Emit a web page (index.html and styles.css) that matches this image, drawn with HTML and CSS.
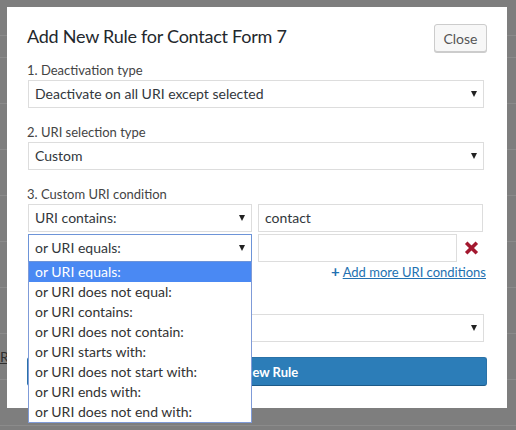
FILE: index.html
```html
<!DOCTYPE html>
<html>
<head>
<meta charset="utf-8">
<link rel="stylesheet" href="styles.css">
</head>
<body>
<div class="page">
  <div class="bg-row r1"></div>
  <div class="bg-row r2"></div>
  <div class="bg-row"></div>
  <div class="bg-row"></div>
  <div class="bg-row"></div>
  <div class="bg-row"></div>
  <div class="bg-row"></div>
  <div class="bg-row"></div>
  <div class="bg-row"><a class="bg-link">Rules</a></div>
  <div class="bg-row"></div>
</div>

<div class="modal">
  <div class="head">
    <h2 class="title">Add New Rule for Contact Form 7</h2>
    <button class="btn-close">Close</button>
  </div>

  <div class="field">
    <div class="label">1. Deactivation type</div>
    <div class="select wide"><span>Deactivate on all URI except selected</span><i class="caret"></i></div>
  </div>

  <div class="field">
    <div class="label">2. URI selection type</div>
    <div class="select wide"><span>Custom</span><i class="caret"></i></div>
  </div>

  <div class="field">
    <div class="label">3. Custom URI condition</div>
    <div class="cond-row first">
      <div class="select half"><span>URI contains:</span><i class="caret"></i></div>
      <div class="input full">contact</div>
    </div>
    <div class="cond-row">
      <div class="sel-wrap">
        <div class="select half focus"><span>or URI equals:</span><i class="caret"></i></div>
        <ul class="dropdown">
          <li class="active">or URI equals:</li>
          <li>or URI does not equal:</li>
          <li>or URI contains:</li>
          <li>or URI does not contain:</li>
          <li>or URI starts with:</li>
          <li>or URI does not start with:</li>
          <li>or URI ends with:</li>
          <li>or URI does not end with:</li>
        </ul>
      </div>
      <div class="input short"></div>
      <svg class="remove" width="15" height="14" viewBox="0 0 15 14"><path d="M2.2 1.8 L12.8 12.2 M12.8 1.8 L2.2 12.2" stroke="#a3182f" stroke-width="3.6" stroke-linecap="butt" fill="none"/></svg>
    </div>
    <div class="add-line">
      <a class="add-link"><span class="plus">+</span><span class="add-text">Add more URI conditions</span></a>
    </div>
  </div>

  <div class="field">
    <div class="label-space"></div>
    <div class="select wide"><span></span><i class="caret"></i></div>
  </div>

  <button class="btn-primary">Add New Rule</button>
</div>
</body>
</html>
```

FILE: styles.css
```css
* { box-sizing: border-box; }

body {
  margin: 0;
  width: 516px;
  height: 430px;
  overflow: hidden;
  position: relative;
  background: #7e7e7e;
  font-family: Lato, "Open Sans", sans-serif;
}

/* background page behind overlay */
.page {
  display: flex;
  flex-direction: column;
}
.bg-row {
  height: 46px;
  border-bottom: 1px solid #8b8b8b;
  display: flex;
  align-items: center;
}
.bg-row.r1 { height: 36px; }
.bg-row.r2 { height: 22px; }
.bg-link {
  font-size: 14px;
  color: #2f2f2f;
  text-decoration: underline;
}

/* modal */
.modal {
  position: absolute;
  left: 7px;
  top: 7px;
  width: 500px;
  height: 401px;
  background: #fff;
  padding: 17px 20px 0 20px;
  color: #32373c;
}
.head {
  display: flex;
  justify-content: space-between;
  align-items: flex-start;
  height: 28px;
  margin-bottom: 9px;
}
.title {
  margin: 0;
  font-size: 18px;
  letter-spacing: -0.25px;
  font-weight: 400;
  line-height: 24px;
  color: #23282d;
}
.btn-close {
  width: 53px;
  height: 28px;
  padding: 0;
  border: 1px solid #cccccc;
  border-radius: 3px;
  background: #f7f7f7;
  box-shadow: 0 1px 0 #cccccc;
  font-family: inherit;
  font-size: 14px;
  color: #555555;
}

.field { margin-bottom: 15px; }
.label {
  font-size: 13px;
  line-height: 18px;
  height: 18px;
  color: #444444;
}
.label-space { height: 18px; }

.select {
  margin: 1px 0 0 1px;
  height: 28px;
  border: 1px solid #dddddd;
  background: #fff;
  display: flex;
  align-items: center;
  justify-content: space-between;
  padding: 0 6px;
  font-size: 14px;
  line-height: 18px;
  color: #32373c;
}
.select.wide { width: 456px; }
.select.half { width: 224px; margin: 0; }
.select.focus { border-color: #6d94d8; }
.caret {
  width: 0;
  height: 0;
  border-left: 3.5px solid transparent;
  border-right: 3.5px solid transparent;
  border-top: 6px solid #222;
}

.cond-row {
  display: flex;
  align-items: center;
  margin: 2px 0 0 1px;
  height: 28px;
}
.cond-row.first { margin-top: 1px; }
.input {
  height: 28px;
  border: 1px solid #dddddd;
  margin-left: 6px;
  padding: 0 6px;
  font-size: 14px;
  line-height: 26px;
  color: #32373c;
}
.input.full { width: 225px; }
.input.short { width: 199px; }
.remove { margin-left: 7px; display: block; }

.sel-wrap { position: relative; width: 224px; height: 28px; }
.dropdown {
  position: absolute;
  left: 0;
  top: 28px;
  width: 224px;
  margin: 0;
  padding: 0;
  list-style: none;
  background: #fff;
  border: 1px solid #7f9bd8;
  border-top: none;
  z-index: 5;
}
.dropdown li {
  height: 20px;
  line-height: 20px;
  padding-left: 6px;
  font-size: 14px;
  color: #333;
  white-space: nowrap;
}
.dropdown li.active {
  background: #4a89f3;
  color: #fff;
}

.add-line {
  height: 18px;
  line-height: 18px;
  text-align: right;
  padding-right: 1px;
  font-size: 13px;
}
.add-link { color: #2271b1; }
.plus {
  font-weight: 700;
  margin-right: 3px;
  font-size: 15px;
}
.add-text { text-decoration: underline; }

.btn-primary {
  display: block;
  width: 460px;
  height: 29px;
  padding: 0;
  border: 1px solid #2a72a8;
  border-bottom-color: #1d5a88;
  border-radius: 3px;
  background: #2c7db8;
  color: #fff;
  font-family: inherit;
  font-size: 13px;
  font-weight: 700;
}
```
